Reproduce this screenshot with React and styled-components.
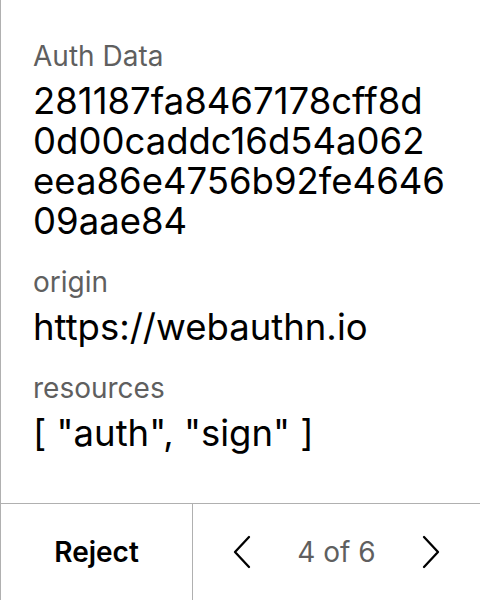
import styled, { createGlobalStyle } from "styled-components";

const Global = createGlobalStyle`
  html, body { margin: 0; padding: 0; background: #fff; }
  body { font-family: Inter, "Noto Sans", sans-serif; }
`;

const Frame = styled.div`
  width: 480px;
  height: 600px;
  box-sizing: border-box;
  border-left: 1px solid #b0b0b0;
  display: flex;
  flex-direction: column;
`;

const Body = styled.div`
  flex: 1;
  padding: 39px 32px 0 32px;
  display: flex;
  flex-direction: column;
  gap: 24px;
`;

const Field = styled.div`
  display: flex;
  flex-direction: column;
  gap: 8px;
`;

const Label = styled.div`
  font-size: 28px;
  line-height: 34px;
  color: #5f5f5f;
`;

const Value = styled.div`
  font-size: 36.5px;
  line-height: 40px;
  color: #000;
  word-break: break-all;
`;

const Chunk = styled.span`
  display: block;
`;

const Footer = styled.div`
  height: 96px;
  border-top: 1px solid #b0b0b0;
  display: grid;
  grid-template-columns: 192px 1fr;
`;

const RejectButton = styled.button`
  all: unset;
  display: flex;
  align-items: center;
  justify-content: center;
  border-right: 1px solid #b0b0b0;
  font-family: Inter, sans-serif;
  font-weight: 600;
  font-size: 28px;
  color: #000;
  cursor: pointer;
`;

const Pager = styled.div`
  display: flex;
  align-items: center;
  justify-content: center;
  gap: 46px;
`;

const Count = styled.span`
  font-size: 28px;
  color: #5f5f5f;
`;

const Arrow = styled.button`
  all: unset;
  display: flex;
  cursor: pointer;
`;

function Chevron({ dir }) {
  return (
    <svg width="18" height="34" viewBox="0 0 18 34" fill="none" stroke="#000" strokeWidth="2.3" strokeLinecap="round" strokeLinejoin="round">
      {dir === "left" ? <path d="M16 2 L2 17 L16 32" /> : <path d="M2 2 L16 17 L2 32" />}
    </svg>
  );
}

const fields = [
  {
    label: "Auth Data",
    lines: ["281187fa8467178cff8d", "0d00caddc16d54a062", "eea86e4756b92fe4646", "09aae84"],
  },
  { label: "origin", lines: ["https://webauthn.io"] },
  { label: "resources", lines: ['[ "auth", "sign" ]'] },
];

export default function App() {
  return (
    <>
      <Global />
      <Frame>
        <Body>
          {fields.map((f) => (
            <Field key={f.label}>
              <Label>{f.label}</Label>
              <Value>
                {f.lines.map((l, i) => (
                  <Chunk key={i}>{l}</Chunk>
                ))}
              </Value>
            </Field>
          ))}
        </Body>
        <Footer>
          <RejectButton>Reject</RejectButton>
          <Pager>
            <Arrow><Chevron dir="left" /></Arrow>
            <Count>4 of 6</Count>
            <Arrow><Chevron dir="right" /></Arrow>
          </Pager>
        </Footer>
      </Frame>
    </>
  );
}
